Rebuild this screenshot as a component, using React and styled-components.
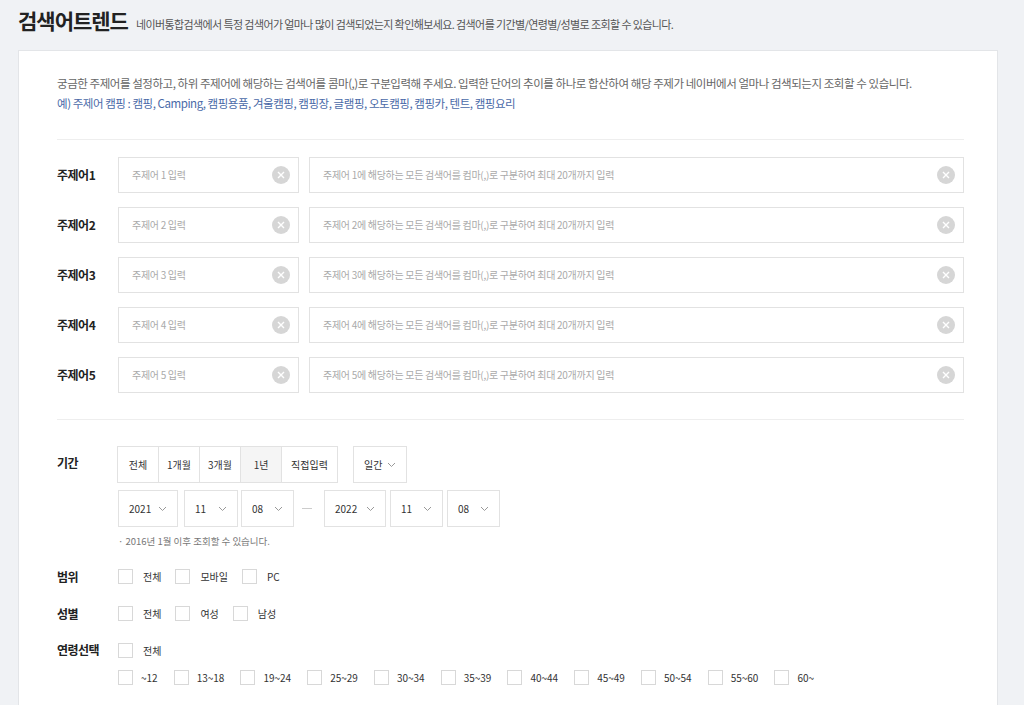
import React from "react";
import styled, { createGlobalStyle } from "styled-components";

const G = createGlobalStyle`
  body{margin:0;background:#f0f2f5;font-family:"Noto Sans CJK KR","Noto Sans",sans-serif;color:#333;line-height:1.2;}
`;
const Page = styled.div`padding:8px 26px 0 18px;`;
const Head = styled.div`display:flex;align-items:baseline;gap:8px;height:34px;`;
const Title = styled.h1`margin:0;font-size:21px;font-weight:700;color:#222;letter-spacing:-1px;`;
const Sub = styled.span`font-size:11px;color:#555;letter-spacing:-0.6px;`;
const Card = styled.div`margin-top:8px;background:#fff;border:1px solid #e3e5e8;padding:22px 33px 0 38px;height:660px;box-sizing:border-box;`;
const Intro = styled.p`margin:0;font-size:11.5px;line-height:20px;color:#666;letter-spacing:-0.45px;white-space:nowrap;padding-bottom:26px;border-bottom:1px solid #eee;`;
const Ex = styled.span`color:#4a6aa8;`;
const Section = styled.div`padding:${p => p.$pad};border-bottom:${p => p.$line ? "1px solid #eee" : "none"};display:flex;flex-direction:column;gap:${p => p.$gap}px;`;
const Row = styled.div`display:flex;align-items:${p => p.$top ? "flex-start" : "center"};`;
const Label = styled.div`width:61px;flex:none;font-size:12px;font-weight:700;color:#222;letter-spacing:-0.5px;${p => p.$top && "padding-top:10px;"}`;
const Input = styled.div`height:36px;box-sizing:border-box;border:1px solid #e2e2e2;display:flex;align-items:center;justify-content:space-between;padding:0 8px 0 13px;${p => p.$w ? `width:${p.$w}px;flex:none;margin-right:10px;` : "flex:1;"}font-size:10px;color:#aaa;letter-spacing:-0.3px;`;
const Clear = styled.span`width:18px;height:18px;border-radius:50%;background:#d6d6d6;display:flex;align-items:center;justify-content:center;`;
const Col = styled.div`display:flex;flex-direction:column;gap:${p => p.$gap}px;`;
const Group = styled.div`display:flex;margin-right:15px;`;
const Btn = styled.div`height:37px;box-sizing:border-box;border:1px solid #e2e2e2;margin-left:-1px;width:${p => p.$w}px;display:flex;align-items:center;justify-content:center;font-size:10px;color:#333;background:${p => p.$on ? "#f5f5f5" : "#fff"};`;
const Sel = styled.div`height:37px;box-sizing:border-box;border:1px solid #e2e2e2;width:${p => p.$w}px;margin-right:${p => p.$mr}px;display:flex;align-items:center;justify-content:space-between;padding:0 10px;font-size:10px;color:#333;`;
const Dash = styled.span`width:10px;height:1px;background:#ccc;margin:0 12px 0 8px;`;
const Note = styled.div`font-size:9.5px;color:#777;padding-top:2px;`;
const Checks = styled.div`display:flex;align-items:center;`;
const Chk = styled.label`display:flex;align-items:center;font-size:10px;color:#333;margin-right:${p => p.$mr || 14}px;`;
const Box = styled.span`width:13px;height:13px;border:1px solid #d8d8d8;margin-right:${p => p.$g || 10}px;background:#fff;`;

const X = () => <Clear><svg width="8" height="8" viewBox="0 0 8 8"><path d="M1 1L7 7M7 1L1 7" stroke="#fff" strokeWidth="1.4"/></svg></Clear>;
const Chev = () => <svg width="9" height="6" viewBox="0 0 9 6"><path d="M1 1l3.5 3.5L8 1" fill="none" stroke="#999" strokeWidth="1"/></svg>;

export default function App() {
  const ages = ["~12","13~18","19~24","25~29","30~34","35~39","40~44","45~49","50~54","55~60","60~"];
  return (
    <Page>
      <G />
      <Head>
        <Title>검색어트렌드</Title>
        <Sub>네이버통합검색에서 특정 검색어가 얼마나 많이 검색되었는지 확인해보세요. 검색어를 기간별/연령별/성별로 조회할 수 있습니다.</Sub>
      </Head>
      <Card>
        <Intro>
          궁금한 주제어를 설정하고, 하위 주제어에 해당하는 검색어를 콤마(,)로 구분입력해 주세요. 입력한 단어의 추이를 하나로 합산하여 해당 주제가 네이버에서 얼마나 검색되는지 조회할 수 있습니다.<br />
          <Ex>예) 주제어 캠핑 : 캠핑, Camping, 캠핑용품, 겨울캠핑, 캠핑장, 글램핑, 오토캠핑, 캠핑카, 텐트, 캠핑요리</Ex>
        </Intro>
        <Section $pad="17px 0 26px" $line $gap={14}>
          {[1,2,3,4,5].map(n => (
            <Row key={n}>
              <Label>주제어{n}</Label>
              <Input $w={181}>주제어 {n} 입력<X /></Input>
              <Input>주제어 {n}에 해당하는 모든 검색어를 컴마(,)로 구분하여 최대 20개까지 입력<X /></Input>
            </Row>
          ))}
        </Section>
        <Section $pad="26px 0 0" $gap={22}>
          <Row $top>
            <Label $top>기간</Label>
            <Col $gap={7}>
              <Row>
                <Group>
                  <Btn $w={42}>전체</Btn><Btn $w={42}>1개월</Btn><Btn $w={42}>3개월</Btn><Btn $w={42} $on>1년</Btn><Btn $w={57}>직접입력</Btn>
                </Group>
                <Sel $w={54} $mr={0}>일간<Chev /></Sel>
              </Row>
              <Row>
                <Sel $w={60} $mr={6}>2021<Chev /></Sel>
                <Sel $w={54} $mr={3}>11<Chev /></Sel>
                <Sel $w={53} $mr={0}>08<Chev /></Sel>
                <Dash />
                <Sel $w={62} $mr={4}>2022<Chev /></Sel>
                <Sel $w={53} $mr={4}>11<Chev /></Sel>
                <Sel $w={53} $mr={0}>08<Chev /></Sel>
              </Row>
              <Note>· 2016년 1월 이후 조회할 수 있습니다.</Note>
            </Col>
          </Row>
          <Row><Label>범위</Label><Checks><Chk><Box />전체</Chk><Chk><Box />모바일</Chk><Chk><Box />PC</Chk></Checks></Row>
          <Row><Label>성별</Label><Checks><Chk><Box />전체</Chk><Chk><Box />여성</Chk><Chk><Box />남성</Chk></Checks></Row>
          <Row $top>
            <Label>연령선택</Label>
            <Col $gap={12}>
              <Checks><Chk><Box />전체</Chk></Checks>
              <Checks>{ages.map(a => <Chk key={a} $mr={16}><Box $g={8} />{a}</Chk>)}</Checks>
            </Col>
          </Row>
        </Section>
      </Card>
    </Page>
  );
}
